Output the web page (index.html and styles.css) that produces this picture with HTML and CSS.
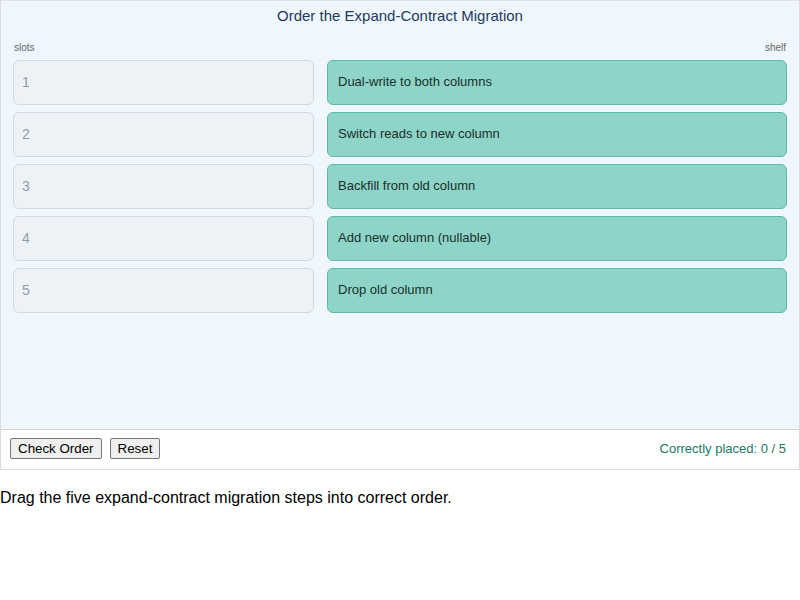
FILE: index.html
```html
<!DOCTYPE html>
<html>
<head>
<meta charset="utf-8">
<link rel="stylesheet" href="styles.css">
</head>
<body>
<div class="wrap">
  <div class="stage">
    <div class="title">Order the Expand-Contract Migration</div>
    <div class="labels"><span>slots</span><span>shelf</span></div>
    <div class="board">
      <div class="col">
        <div class="slot">1</div>
        <div class="slot">2</div>
        <div class="slot">3</div>
        <div class="slot">4</div>
        <div class="slot">5</div>
      </div>
      <div class="col">
        <div class="card">Dual-write to both columns</div>
        <div class="card">Switch reads to new column</div>
        <div class="card">Backfill from old column</div>
        <div class="card">Add new column (nullable)</div>
        <div class="card">Drop old column</div>
      </div>
    </div>
  </div>
  <div class="controls">
    <button class="btn">Check Order</button>
    <button class="btn">Reset</button>
    <span class="status">Correctly placed: 0 / 5</span>
  </div>
</div>
<p class="desc">Drag the five expand-contract migration steps into correct order.</p>
</body>
</html>
```

FILE: styles.css
```css
html, body {
  margin: 0;
  padding: 0;
  background: #ffffff;
  font-family: "Liberation Sans", Arial, Helvetica, sans-serif;
}
.wrap {
  width: 800px;
  box-sizing: border-box;
  border: 1px solid #dcdcdc;
  border-top-color: #e3e3e3;
}
.stage {
  height: 429px;
  background: #eff6fe;
  border-bottom: 1px solid #d4d4d4;
  padding: 0 12px;
  box-sizing: border-box;
}
.title {
  height: 29px;
  line-height: 29px;
  text-align: center;
  font-size: 15px;
  color: #1e3a5c;
}
.labels {
  display: flex;
  justify-content: space-between;
  font-size: 10px;
  color: #666666;
  height: 30px;
  line-height: 36px;
  padding: 0 1px;
}
.board {
  display: grid;
  grid-template-columns: 301px 1fr;
  column-gap: 13px;
}
.col {
  display: flex;
  flex-direction: column;
  gap: 7px;
}
.slot {
  height: 45px;
  box-sizing: border-box;
  border: 1.5px solid #cdd9e3;
  border-radius: 6px;
  background: #eef2f6;
  color: #8d9cad;
  font-size: 14px;
  display: flex;
  align-items: center;
  padding-left: 8px;
  padding-bottom: 1px;
}
.card {
  height: 45px;
  box-sizing: border-box;
  border: 1.5px solid #5cb8a8;
  border-radius: 6px;
  background: #8fd4c8;
  color: #17302b;
  font-size: 13px;
  display: flex;
  align-items: center;
  padding-left: 10px;
  padding-bottom: 2px;
}
.controls {
  height: 39px;
  box-sizing: border-box;
  display: flex;
  align-items: center;
  padding: 0 13px 2px 9px;
  gap: 8px;
}
.btn {
  font-family: "Liberation Sans", Arial, sans-serif;
  font-size: 13.33px;
  padding: 1px 7px;
  height: 21px;
  background: #efefef;
  border: 1px solid #767676;
  border-radius: 2px;
  color: #000;
}
.status {
  margin-left: auto;
  font-size: 13px;
  color: #1a7a64;
}
.desc {
  margin: 19px 0 0 0;
  font-size: 16px;
  color: #000;
}
```
